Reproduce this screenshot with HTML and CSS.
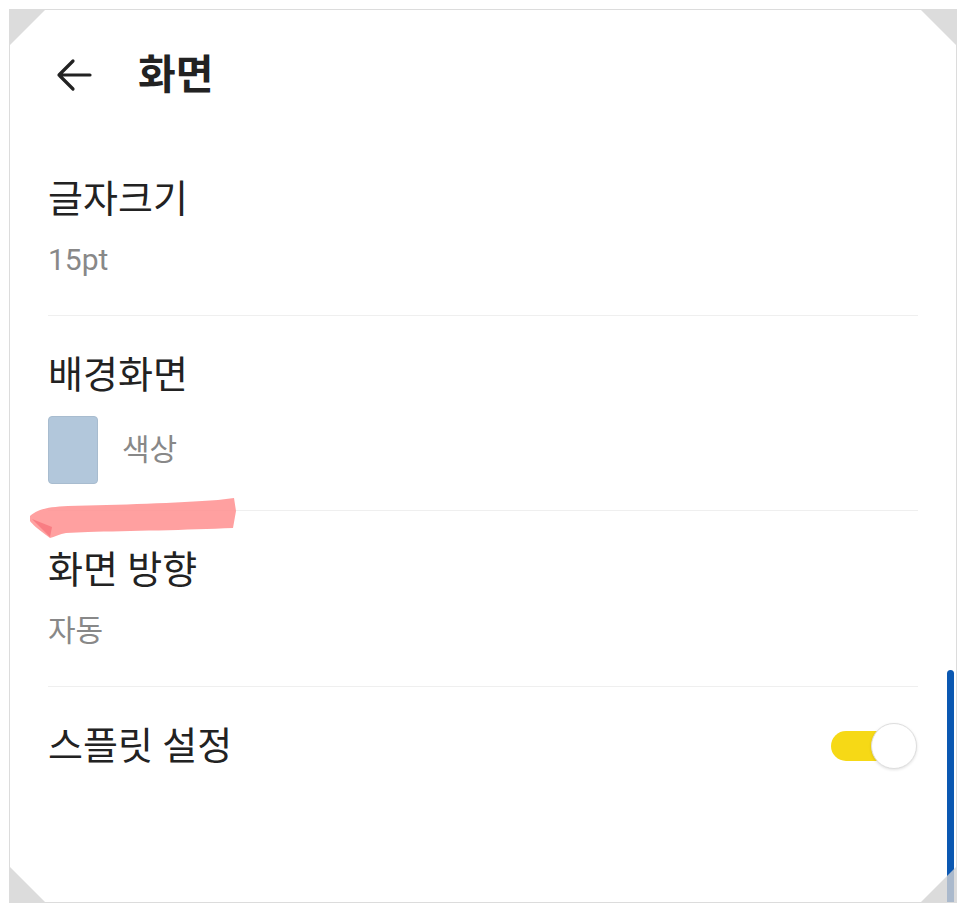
FILE: index.html
```html
<!DOCTYPE html>
<html lang="ko">
<head>
  <meta charset="utf-8"/>
  <title>화면</title>
  <link rel="stylesheet" href="styles.css">
</head>
<body>
  <div class="frame">
    <div class="header">
      <svg class="back" width="40" height="40" viewBox="0 0 40 40">
        <path d="M36 20H5M19 6L5 20l14 14" fill="none" stroke="#222" stroke-width="3.2" stroke-linecap="round" stroke-linejoin="round"/>
      </svg>
      <h1>화면</h1>
    </div>

    <div class="row">
      <div class="title">글자크기</div>
      <div class="sub">15pt</div>
    </div>

    <div class="row row-bg">
      <div class="title">배경화면</div>
      <div class="swatch-line">
        <span class="swatch"></span>
        <span class="sub">색상</span>
      </div>
    </div>

    <div class="row">
      <div class="title">화면 방향</div>
      <div class="sub">자동</div>
    </div>

    <div class="row row-last">
      <div class="title">스플릿 설정</div>
      <div class="toggle"><span class="knob"></span></div>
    </div>

    <svg class="marker" width="210" height="42" viewBox="0 0 210 42">
      <path d="M2 19 C10 12 20 10 40 9 C90 8 150 6 190 3 L206 1 L208 14 L205 31 C160 33 100 34 60 35 L38 36 C32 37 26 40 22 41 L18 38 C10 32 4 27 2 24 Z" fill="#ff8f8f" opacity="0.85"/>
      <path d="M4 22 L24 30 L22 40 Z" fill="#f76e76" opacity="0.7"/>
    </svg>

    <div class="scroll"></div>
    <span class="corner tl"></span>
    <span class="corner tr"></span>
    <span class="corner bl"></span>
    <span class="corner br"></span>
  </div>
</body>
</html>
```

FILE: styles.css
```css
body {
  margin: 0;
  background: #fff;
  font-family: Roboto, "Noto Sans CJK KR", sans-serif;
  color: #222;
}
.frame {
  position: relative;
  margin: 9px;
  width: 948px;
  height: 894px;
  border: 1px solid #dcdcdc;
  padding: 0 38px;
  box-sizing: border-box;
  overflow: hidden;
}
.header {
  display: flex;
  align-items: center;
  height: 130px;
}
.back {
  margin-left: 6px;
  margin-right: 44px;
}
h1 {
  margin: 0;
  font-size: 41px;
  font-weight: 700;
  line-height: 50px;
}
.row {
  display: flex;
  flex-direction: column;
  gap: 16px;
  padding: 34px 0 35px;
  border-bottom: 1px solid #efefef;
}
.row-bg {
  padding-bottom: 26px;
}
.row-last {
  flex-direction: row;
  align-items: center;
  justify-content: space-between;
  border-bottom: none;
}
.title {
  font-size: 38px;
  line-height: 50px;
  color: #222;
}
.sub {
  font-size: 30px;
  line-height: 40px;
  color: #888;
}
.swatch-line {
  display: flex;
  align-items: center;
  gap: 24px;
}
.swatch {
  width: 50px;
  height: 68px;
  border-radius: 4px;
  background: #b2c7db;
  border: 1px solid #a8bccf;
  box-sizing: border-box;
}
.toggle {
  position: relative;
  width: 86px;
  height: 48px;
  margin-right: 1px;
}
.toggle::before {
  content: "";
  position: absolute;
  left: 0;
  top: 9px;
  width: 70px;
  height: 30px;
  border-radius: 15px;
  background: #f6d916;
}
.knob {
  position: absolute;
  right: 0;
  top: 1px;
  width: 46px;
  height: 46px;
  border-radius: 50%;
  background: #fff;
  border: 1px solid #dedede;
  box-sizing: border-box;
  box-shadow: 0 1px 3px rgba(0, 0, 0, 0.12);
}
.marker {
  position: absolute;
  left: 18px;
  top: 487px;
}
.scroll {
  position: absolute;
  right: 2px;
  top: 660px;
  width: 7px;
  height: 232px;
  border-radius: 4px 4px 0 0;
  background: #0b58b2;
}
.corner {
  position: absolute;
  width: 0;
  height: 0;
  border-style: solid;
  border-color: transparent;
}
.tl {
  left: 0;
  top: 0;
  border-width: 35px 35px 0 0;
  border-top-color: #dcdcdc;
}
.tr {
  right: 0;
  top: 0;
  border-width: 0 35px 35px 0;
  border-right-color: #dcdcdc;
}
.bl {
  left: 0;
  bottom: 0;
  border-width: 35px 0 0 35px;
  border-left-color: #dcdcdc;
}
.br {
  right: 0;
  bottom: 0;
  border-width: 0 0 35px 35px;
  border-bottom-color: rgba(210, 210, 210, 0.8);
}
```
